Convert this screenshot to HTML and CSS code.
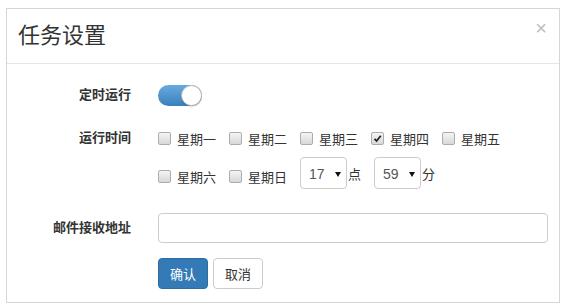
FILE: index.html
```html
<!DOCTYPE html>
<html>
<head>
    <title>任务设置</title>
    <link rel="stylesheet" href="styles.css">
</head>
<body>
    <div class="modal">
        <div class="modal-header">
            <h4 class="modal-title">任务设置</h4>
            <button type="button" class="close">×</button>
        </div>
        <form class="modal-body" onsubmit="event.preventDefault();">
            <div class="form-row row-switch">
                <label class="row-label">定时运行</label>
                <div class="row-control">
                    <span class="switch"><span class="knob"></span></span>
                </div>
            </div>
            <div class="form-row row-days">
                <label class="row-label">运行时间</label>
                <div class="row-control days">
                    <div class="day-line">
                        <label class="day"><span class="box"></span>星期一</label>
                        <label class="day"><span class="box"></span>星期二</label>
                        <label class="day"><span class="box"></span>星期三</label>
                        <label class="day"><span class="box checked"><svg width="11" height="11" viewBox="0 0 11 11"><path d="M2.5 5.8 L4.6 8 L8.8 2.8" fill="none" stroke="#222" stroke-width="1.8"/></svg></span>星期四</label>
                        <label class="day"><span class="box"></span>星期五</label>
                    </div>
                    <div class="day-line line-two">
                        <label class="day"><span class="box"></span>星期六</label>
                        <label class="day"><span class="box"></span>星期日</label>
                        <span class="select"><span>17</span><i class="caret"></i></span>
                        <span class="unit">点</span>
                        <span class="select"><span>59</span><i class="caret"></i></span>
                        <span class="unit">分</span>
                    </div>
                </div>
            </div>
            <div class="form-row row-email">
                <label class="row-label" for="email">邮件接收地址</label>
                <div class="row-control">
                    <input type="text" id="email" class="email">
                </div>
            </div>
            <div class="form-row row-buttons">
                <div class="row-label"></div>
                <div class="row-control">
                    <button type="submit" class="btn btn-primary">确认</button>
                    <button type="button" class="btn">取消</button>
                </div>
            </div>
        </form>
    </div>
</body>
</html>
```

FILE: styles.css
```css
body {
    margin: 0;
    padding: 8px 6px 5px;
    font-family: "Liberation Sans", "Noto Sans CJK SC", sans-serif;
    font-size: 13px;
    color: #333;
    background-color: #fff;
}

.modal {
    width: 554px;
    box-sizing: border-box;
    border: 1px solid #d6d6d6;
}

.modal-header {
    height: 54px;
    display: flex;
    align-items: center;
    justify-content: space-between;
    padding: 0 12px 0 11px;
    border-bottom: 1px solid #e5e5e5;
}

.modal-title {
    margin: 0;
    font-size: 22px;
    font-weight: normal;
    line-height: 1;
    color: #333;
}

.close {
    align-self: flex-start;
    margin-top: 9px;
    padding: 0;
    border: none;
    background: none;
    font-family: "Liberation Sans", sans-serif;
    font-size: 20px;
    line-height: 1;
    color: #bdbdbd;
    cursor: pointer;
}

.modal-body {
    margin: 0;
    padding: 16px 11px 13px 0;
}

.form-row {
    display: flex;
    align-items: flex-start;
}

.row-label {
    flex: none;
    width: 124px;
    margin-right: 27px;
    text-align: right;
    font-weight: bold;
    color: #333;
}

.row-control {
    display: flex;
    align-items: center;
}

.row-switch .row-label,
.row-switch .row-control {
    height: 30px;
    line-height: 30px;
}

.switch {
    display: flex;
    justify-content: flex-end;
    width: 44px;
    height: 21px;
    border-radius: 11px;
    background: linear-gradient(#68abde, #3a7fbe);
}

.knob {
    width: 21px;
    height: 21px;
    box-sizing: border-box;
    border-radius: 50%;
    border: 1px solid #bbb;
    background-color: #fff;
    box-shadow: 0 1px 1px rgba(0, 0, 0, 0.15);
}

.row-days {
    margin-top: 18px;
}

.row-days .row-label {
    line-height: 20px;
}

.days {
    flex-direction: column;
    align-items: flex-start;
}

.day-line {
    display: flex;
    align-items: center;
    height: 20px;
}

.day-line.line-two {
    height: 32px;
    margin-top: 9px;
}

.line-two .day {
    margin-top: 6px;
}

.day {
    display: flex;
    align-items: center;
    margin-right: 13px;
    color: #333;
}

.box {
    display: flex;
    align-items: center;
    justify-content: center;
    width: 13px;
    height: 13px;
    box-sizing: border-box;
    margin-right: 6px;
    border: 1px solid #acacac;
    border-radius: 2px;
    background: linear-gradient(#f4f4f4, #d8d8d8);
}

.select {
    display: flex;
    align-items: center;
    width: 47px;
    height: 32px;
    box-sizing: border-box;
    padding: 2px 0 0 8px;
    border: 1px solid #ccc;
    border-radius: 4px;
    font-size: 14px;
    color: #555;
}

.caret {
    margin-left: 10px;
    border-left: 3px solid transparent;
    border-right: 3px solid transparent;
    border-top: 5px solid #111;
}

.unit {
    margin-left: 1px;
    margin-right: 13px;
}

.row-email {
    margin-top: 24px;
}

.row-email .row-label {
    line-height: 30px;
}

.email {
    width: 390px;
    height: 30px;
    box-sizing: border-box;
    margin: 0;
    border: 1px solid #ccc;
    border-radius: 4px;
}

.row-buttons {
    margin-top: 15px;
}

.btn {
    width: 50px;
    height: 31px;
    margin: 0 5px 0 0;
    padding: 0;
    border: 1px solid #ccc;
    border-radius: 4px;
    background-color: #fff;
    font-family: "Liberation Sans", "Noto Sans CJK SC", sans-serif;
    font-size: 13px;
    color: #333;
    cursor: pointer;
}

.btn-primary {
    background-color: #337ab7;
    border-color: #2e6da4;
    color: #fff;
}
```
